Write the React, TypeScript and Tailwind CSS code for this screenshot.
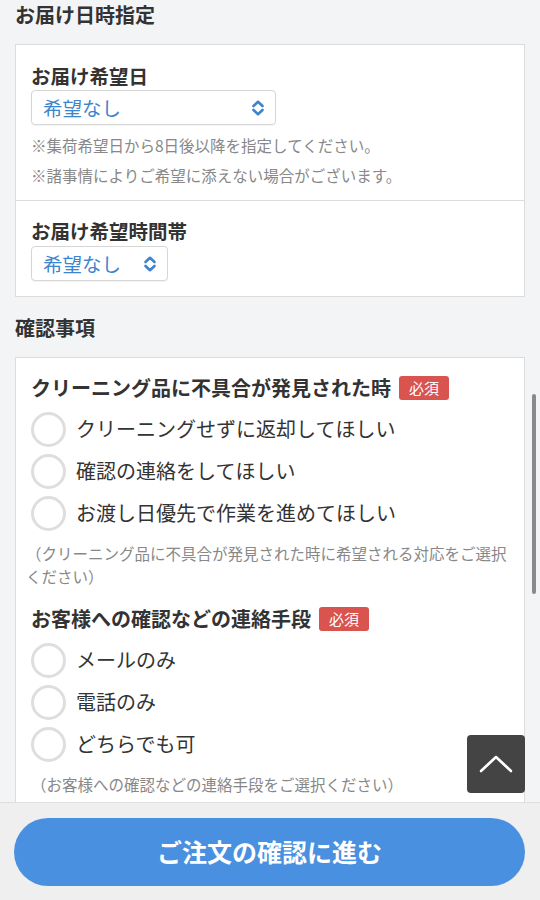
const font = { fontFamily: '"Noto Sans CJK JP", "Noto Sans", sans-serif' };

function SelectBox({ width, mt }: { width: string; mt: string }) {
  return (
    <div
      className={`flex h-[35px] items-center justify-between rounded-[4px] border border-[#d6d6d6] bg-white pl-[11px] pr-[10px] text-[19.5px] text-[#3d84cf] shadow-[0_1px_1px_rgba(0,0,0,0.05)] ${width} ${mt}`}
    >
      <span className="leading-none">希望なし</span>
      <svg width="14" height="18" viewBox="0 0 14 18" fill="none" stroke="#3d84cf" strokeWidth="2.6" strokeLinecap="round" strokeLinejoin="round">
        <path d="M2.5 7 L7 2.8 L11.5 7" />
        <path d="M2.5 11 L7 15.2 L11.5 11" />
      </svg>
    </div>
  );
}

function Radio({ label }: { label: string }) {
  return (
    <div className="flex h-[42px] items-center">
      <span className="h-[35px] w-[35px] shrink-0 rounded-full border-[3px] border-[#dedede] bg-white" />
      <span className="ml-[10px] text-[20px] text-[#333]">{label}</span>
    </div>
  );
}

function Question({ title, options, help, helpClass }: { title: string; options: string[]; help: string; helpClass?: string }) {
  return (
    <div>
      <div className="flex items-center leading-[28px]">
        <span className="text-[20px] font-bold text-[#333]">{title}</span>
        <span className="ml-[8px] rounded-[3px] bg-[#d9534f] px-[10px] text-[15px] leading-[24px] text-white">必須</span>
      </div>
      <div className="mt-[6px]">
        {options.map((o) => (
          <Radio key={o} label={o} />
        ))}
      </div>
      <p className={`mt-[8px] text-[15.5px] leading-[23px] text-[#888] ${helpClass ?? ""}`}>{help}</p>
    </div>
  );
}

export default function App() {
  return (
    <div className="relative min-h-[900px] bg-[#f3f4f6] pb-[120px]" style={font}>
      <h2 className="pl-[15px] text-[20px] font-bold leading-[30px] text-[#333]">お届け日時指定</h2>

      <div className="mx-[15px] mt-[14px] border border-[#dcdcdc] bg-white">
        <div className="border-b border-[#dcdcdc] px-[15px] pb-[10px] pt-[17px]">
          <div className="text-[19.5px] font-bold leading-[28px] text-[#333]">お届け希望日</div>
          <SelectBox width="w-[245px]" mt="mt-0" />
          <div className="mt-[5px] text-[15.5px] leading-[30px] text-[#888]">
            <p>※集荷希望日から8日後以降を指定してください。</p>
            <p>※諸事情によりご希望に添えない場合がございます。</p>
          </div>
        </div>
        <div className="px-[15px] pb-[15px] pt-[16px]">
          <div className="text-[19.5px] font-bold leading-[28px] text-[#333]">お届け希望時間帯</div>
          <SelectBox width="w-[137px]" mt="mt-[1px]" />
        </div>
      </div>

      <h2 className="mt-[16px] pl-[15px] text-[20px] font-bold leading-[30px] text-[#333]">確認事項</h2>

      <div className="mx-[15px] mt-[14px] border border-[#dcdcdc] bg-white pb-[20px] pl-[15px] pr-[6px] pt-[16px]">
        <Question
          title="クリーニング品に不具合が発見された時"
          options={["クリーニングせずに返却してほしい", "確認の連絡をしてほしい", "お渡し日優先で作業を進めてほしい"]}
          help="（クリーニング品に不具合が発見された時に希望される対応をご選択ください）"
          helpClass="-ml-[5px]"
        />
        <div className="mt-[17px]">
          <Question
            title="お客様への確認などの連絡手段"
            options={["メールのみ", "電話のみ", "どちらでも可"]}
            help="（お客様への確認などの連絡手段をご選択ください）"
          />
        </div>
        <div className="h-[200px]" />
      </div>

      {/* scrollbar */}
      <div className="absolute left-[532px] top-[394px] h-[200px] w-[4px] rounded-full bg-[#8a8a8a]" />

      {/* back to top */}
      <button
        type="button"
        className="fixed left-[467px] top-[735px] flex h-[58px] w-[58px] items-center justify-center rounded-[4px] bg-[#444]"
      >
        <svg width="34" height="18" viewBox="0 0 34 18" fill="none" stroke="white" strokeWidth="2.6" strokeLinecap="round" strokeLinejoin="round">
          <path d="M2 16 L17 2 L32 16" />
        </svg>
      </button>

      <div className="fixed bottom-0 left-0 h-[98px] w-full border-t border-[#dedede] bg-[#efefef] px-[14px] pt-[15px]">
        <button
          type="button"
          className="flex h-[68px] w-[511px] items-center justify-center rounded-full bg-[#4a90e0] text-[25px] font-bold text-white"
        >
          ご注文の確認に進む
        </button>
      </div>
    </div>
  );
}
